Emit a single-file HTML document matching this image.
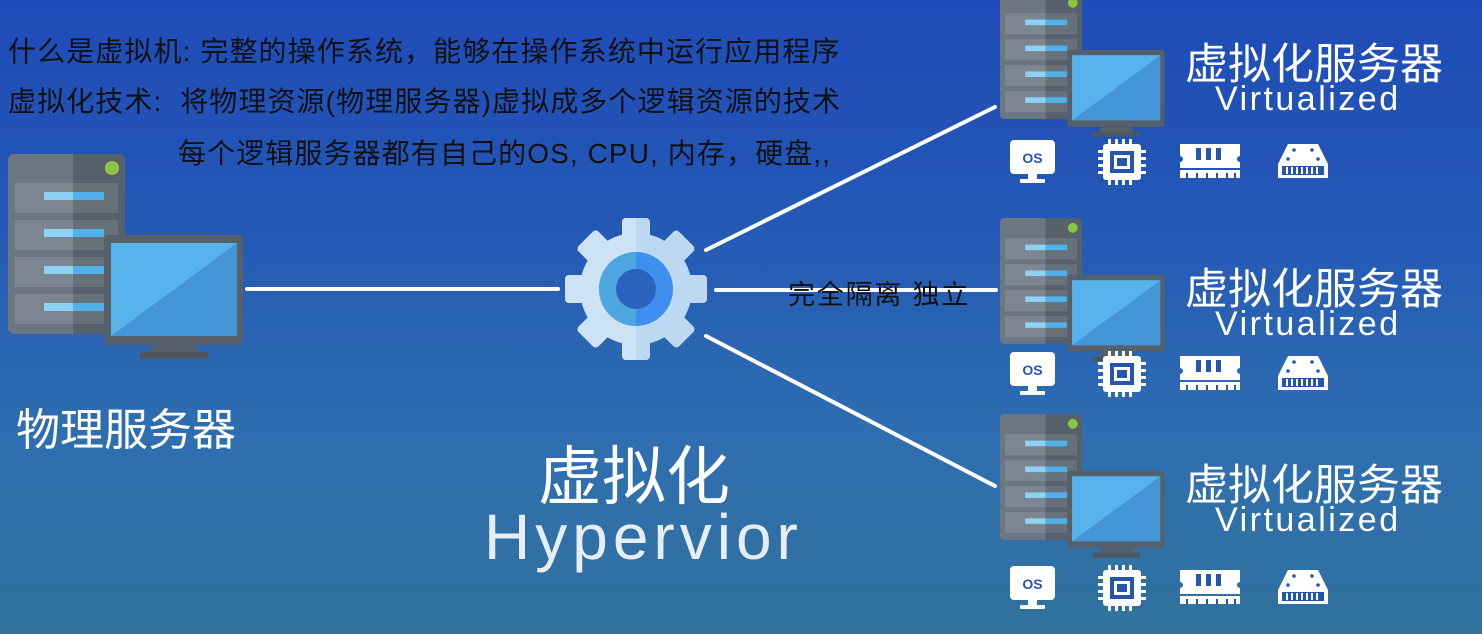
<!DOCTYPE html>
<html><head><meta charset="utf-8"><style>
html,body{margin:0;padding:0}
body{width:1482px;height:634px;overflow:hidden;background:linear-gradient(180deg,#1f4bb8 0%,#2458b6 35%,#2f6fb0 70%,#31719c 100%);position:relative;font-family:"Liberation Sans","Noto Sans CJK SC",sans-serif}
.t{position:absolute;white-space:nowrap}
.b{color:#111;font-size:28px;letter-spacing:1.1px}
.w{color:#fff}
</style></head><body>
<svg width="1482" height="634" style="position:absolute;left:0;top:0">
<defs>
<g id="srv">
<rect x="0" y="0" width="117" height="180" rx="6" fill="#6b7680"/>
<path d="M65 0H111a6 6 0 0 1 6 6V174a6 6 0 0 1-6 6H65Z" fill="#56616b"/>
<g fill="#7b8690"><rect x="7" y="29" width="58" height="30"/><rect x="7" y="66" width="58" height="30"/><rect x="7" y="103" width="58" height="30"/><rect x="7" y="140" width="58" height="30"/></g>
<g fill="#66717a"><rect x="65" y="29" width="45" height="30"/><rect x="65" y="66" width="45" height="30"/><rect x="65" y="103" width="45" height="30"/><rect x="65" y="140" width="45" height="30"/></g>
<g fill="#8fd0f5"><rect x="36" y="38" width="29" height="8"/><rect x="36" y="75" width="29" height="8"/><rect x="36" y="112" width="29" height="8"/><rect x="36" y="149" width="29" height="8"/></g>
<g fill="#4fb0ea"><rect x="65" y="38" width="31" height="8"/><rect x="65" y="75" width="31" height="8"/><rect x="65" y="112" width="31" height="8"/><rect x="65" y="149" width="31" height="8"/></g>
<circle cx="104" cy="14" r="7" fill="#8cc63f"/>
<rect x="96" y="81" width="139" height="110" rx="4" fill="#55606a"/>
<rect x="103" y="89" width="126" height="93" fill="#4395d6"/>
<path d="M103 89H229L103 182Z" fill="#58b2ec"/>
<path d="M145 191H187L192 199H140Z" fill="#55606a"/>
<rect x="132" y="198" width="68" height="7" rx="2" fill="#4d5760"/>
</g>
<g id="icons" fill="#fff">
<rect x="10" y="0" width="45" height="34" rx="4"/>
<text x="32.5" y="23" font-size="14" font-weight="bold" fill="#2456b0" text-anchor="middle" font-family="Liberation Sans">OS</text>
<rect x="28" y="34" width="9" height="6"/><rect x="20" y="39" width="25" height="4" rx="1"/>
<rect x="103" y="4" width="38" height="36" rx="3"/><rect x="110" y="11" width="24" height="22" fill="#2456b0"/><rect x="114" y="15" width="16" height="14"/><rect x="117" y="18" width="10" height="8" fill="#2456b0"/>
<g><rect x="108" y="-1" width="3" height="5"/><rect x="115" y="-1" width="3" height="5"/><rect x="122" y="-1" width="3" height="5"/><rect x="129" y="-1" width="3" height="5"/><rect x="108" y="40" width="3" height="5"/><rect x="115" y="40" width="3" height="5"/><rect x="122" y="40" width="3" height="5"/><rect x="129" y="40" width="3" height="5"/>
<rect x="98" y="10" width="5" height="3"/><rect x="98" y="17" width="5" height="3"/><rect x="98" y="24" width="5" height="3"/><rect x="98" y="31" width="5" height="3"/><rect x="141" y="10" width="5" height="3"/><rect x="141" y="17" width="5" height="3"/><rect x="141" y="24" width="5" height="3"/><rect x="141" y="31" width="5" height="3"/></g>
<path d="M180 4H240V16a3 3 0 0 0 0 6V28H180V22a3 3 0 0 0 0-6Z"/>
<rect x="180" y="30" width="60" height="8"/>
<g fill="#2456b0"><rect x="196" y="8" width="5" height="12"/><rect x="206" y="8" width="5" height="12"/><rect x="216" y="8" width="5" height="12"/><rect x="186" y="33" width="2" height="5"/><rect x="196" y="33" width="2" height="5"/><rect x="206" y="33" width="2" height="5"/><rect x="216" y="33" width="2" height="5"/><rect x="226" y="33" width="2" height="5"/><rect x="234" y="33" width="2" height="5"/></g>
<path d="M288 4H318L328 24V38H278V24Z"/>
<rect x="282" y="26" width="42" height="9" fill="#2456b0"/>
<g><rect x="286" y="27" width="2" height="7"/><rect x="291" y="27" width="2" height="7"/><rect x="296" y="27" width="2" height="7"/><rect x="301" y="27" width="2" height="7"/><rect x="306" y="27" width="2" height="7"/><rect x="311" y="27" width="2" height="7"/><rect x="316" y="27" width="2" height="7"/></g>
<g fill="#2456b0"><circle cx="294" cy="10" r="1.8"/><circle cx="312" cy="10" r="1.8"/><circle cx="288" cy="19" r="1.8"/><circle cx="318" cy="19" r="1.8"/></g>
</g>
</defs>
<g stroke="#fff" stroke-width="4" stroke-linecap="round">
<line x1="247" y1="289" x2="558" y2="289"/>
<line x1="706" y1="250" x2="995" y2="107"/>
<line x1="716" y1="290" x2="996" y2="290"/>
<line x1="706" y1="336" x2="995" y2="486"/>
</g>
<use href="#srv" transform="translate(8,154)"/>
<use href="#srv" transform="translate(1000,-7) scale(0.7)"/>
<use href="#srv" transform="translate(1000,218) scale(0.7)"/>
<use href="#srv" transform="translate(1000,414) scale(0.7)"/>
<use href="#icons" transform="translate(1000,140)"/>
<use href="#icons" transform="translate(1000,352)"/>
<use href="#icons" transform="translate(1000,566)"/>
<g transform="translate(636,289)">
<clipPath id="cl"><rect x="-80" y="-80" width="80" height="160"/></clipPath>
<g fill="#bcd9f1">
<circle r="56"/>
<g><rect x="-14" y="-71" width="28" height="30" rx="4"/><rect x="-14" y="-71" width="28" height="30" rx="4" transform="rotate(45)"/><rect x="-14" y="-71" width="28" height="30" rx="4" transform="rotate(90)"/><rect x="-14" y="-71" width="28" height="30" rx="4" transform="rotate(135)"/><rect x="-14" y="-71" width="28" height="30" rx="4" transform="rotate(180)"/><rect x="-14" y="-71" width="28" height="30" rx="4" transform="rotate(225)"/><rect x="-14" y="-71" width="28" height="30" rx="4" transform="rotate(270)"/><rect x="-14" y="-71" width="28" height="30" rx="4" transform="rotate(315)"/></g>
</g>
<g clip-path="url(#cl)" fill="#cde3f5"><circle r="56"/><rect x="-14" y="-71" width="28" height="30" rx="4"/><rect x="-14" y="-71" width="28" height="30" rx="4" transform="rotate(225)"/><rect x="-14" y="-71" width="28" height="30" rx="4" transform="rotate(270)"/><rect x="-14" y="-71" width="28" height="30" rx="4" transform="rotate(315)"/><rect x="-14" y="-71" width="28" height="30" rx="4" transform="rotate(180)"/></g>
<circle r="37" fill="#3f8ff0"/>
<path d="M0 -37A37 37 0 0 0 0 37Z" fill="#4ea6e0"/>
<circle r="20" fill="#2a63be"/>
</g>
</svg>
<div class="t b" style="left:8px;top:30px">什么是虚拟机: 完整的操作系统，能够在操作系统中运行应用程序</div>
<div class="t b" style="left:8px;top:80px">虚拟化技术:&nbsp; 将物理资源(物理服务器)虚拟成多个逻辑资源的技术</div>
<div class="t b" style="left:178px;top:132px">每个逻辑服务器都有自己的OS, CPU, 内存，硬盘,,</div>
<div class="t b" style="left:788px;top:273px;font-size:27px;letter-spacing:1.8px">完全隔离 独立</div>
<div class="t w" style="left:16px;top:394px;font-size:44px">物理服务器</div>
<div class="t w" style="left:538px;top:426px;font-size:64px">虚拟化</div>
<div class="t" style="left:484px;top:500px;font-size:64px;color:#e6edf5;letter-spacing:5px">Hypervior</div>
<div class="t w" style="left:1185px;top:30px;font-size:43px">虚拟化服务器</div>
<div class="t w" style="left:1215px;top:80px;font-size:34px;letter-spacing:2.5px">Virtualized</div>
<div class="t w" style="left:1185px;top:255px;font-size:43px">虚拟化服务器</div>
<div class="t w" style="left:1215px;top:305px;font-size:34px;letter-spacing:2.5px">Virtualized</div>
<div class="t w" style="left:1185px;top:451px;font-size:43px">虚拟化服务器</div>
<div class="t w" style="left:1215px;top:501px;font-size:34px;letter-spacing:2.5px">Virtualized</div>
</body></html>
